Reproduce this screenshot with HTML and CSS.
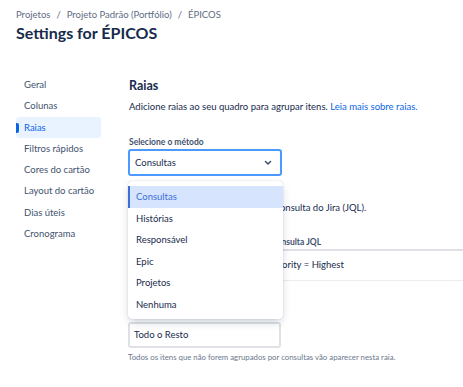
FILE: index.html
```html
<!DOCTYPE html>
<html lang="pt">
<head>
  <meta charset="UTF-8">
  <title>Settings for ÉPICOS</title>
  <link rel="stylesheet" href="styles.css">
</head>
<body>

  <div class="breadcrumb">
    <span>Projetos</span><span class="sep">/</span><span>Projeto Padrão (Portfólio)</span><span class="sep">/</span><span>ÉPICOS</span>
  </div>
  <h1 class="title">Settings for ÉPICOS</h1>

  <div class="layout">
    <ul class="side-nav">
      <li>Geral</li>
      <li>Colunas</li>
      <li class="active">Raias</li>
      <li>Filtros rápidos</li>
      <li>Cores do cartão</li>
      <li>Layout do cartão</li>
      <li>Dias úteis</li>
      <li>Cronograma</li>
    </ul>

    <div class="content">
      <h2>Raias</h2>
      <p class="desc">Adicione raias ao seu quadro para agrupar itens. <a href="#">Leia mais sobre raias.</a></p>

      <div class="field-label">Selecione o método</div>
      <div class="select-wrap">
        <div class="select">
          <span>Consultas</span>
          <svg width="8" height="6" viewBox="0 0 8 6"><path d="M1.5 1.5 L4 4 L6.5 1.5" fill="none" stroke="#42526e" stroke-width="1.6" stroke-linecap="round" stroke-linejoin="round"/></svg>
        </div>
        <!-- menu aberto -->
        <ul class="dropdown">
          <li class="selected">Consultas</li>
          <li>Histórias</li>
          <li>Responsável</li>
          <li>Epic</li>
          <li>Projetos</li>
          <li>Nenhuma</li>
        </ul>
      </div>

      <p class="info">Defina cada raia com base em uma consulta do Jira (JQL).</p>

      <table class="lanes">
        <tr>
          <th class="col-name">Nome</th>
          <th>Consulta JQL</th>
        </tr>
        <tr>
          <td class="col-name">Expedite</td>
          <td>priority = Highest</td>
        </tr>
      </table>

      <div class="input">Todo o Resto</div>
      <p class="help">Todos os itens que não forem agrupados por consultas vão aparecer nesta raia.</p>
    </div>
  </div>

</body>
</html>
```

FILE: styles.css
```css
html, body {
  overflow: hidden;
}

body {
  margin: 0;
  padding: 8px 16px 0;
  width: 600px;
  font-family: 'Lato', 'Noto Sans', sans-serif;
  color: #172b4d;
  background-color: #fff;
}

.breadcrumb {
  font-size: 9.5px;
  line-height: 14px;
  color: #5e6c84;
}

.breadcrumb .sep {
  margin: 0 6px;
}

.title {
  margin: 0;
  font-size: 16px;
  line-height: 22px;
  font-weight: 700;
}

.layout {
  display: flex;
  gap: 28px;
  margin-top: 30px;
}

.side-nav {
  list-style: none;
  margin: 0;
  padding: 0;
  width: 85px;
}

.side-nav li {
  position: relative;
  height: 21.3px;
  line-height: 21.3px;
  padding-left: 8px;
  font-size: 9.5px;
  color: #42526e;
  border-radius: 3px;
  white-space: nowrap;
}

.side-nav li.active {
  background-color: #e9f2ff;
  color: #0c66e4;
}

.side-nav li.active::before {
  content: "";
  position: absolute;
  left: 0;
  top: 6px;
  width: 3px;
  height: 10px;
  border-radius: 0 2px 2px 0;
  background-color: #0c66e4;
}

.content {
  width: 350px;
}

.content h2 {
  margin: 3px 0 0;
  font-size: 12.5px;
  line-height: 18px;
  font-weight: 700;
}

.desc {
  margin: 5px 0 0;
  font-size: 9.5px;
  line-height: 14px;
}

.desc a {
  color: #0c66e4;
  text-decoration: none;
}

.field-label {
  margin-top: 22px;
  font-size: 8.5px;
  line-height: 12px;
  font-weight: 700;
  color: #42526e;
}

.select-wrap {
  position: relative;
  width: 154px;
  margin-top: 1px;
  margin-left: -1px;
}

.select {
  display: flex;
  align-items: center;
  justify-content: space-between;
  height: 27px;
  box-sizing: border-box;
  padding: 0 8px 0 5px;
  border: 2px solid #4c9aff;
  border-radius: 3px;
  font-size: 9.5px;
}

.dropdown {
  position: absolute;
  top: 32px;
  left: 0;
  width: 155px;
  margin: 0;
  padding: 5px 0 4px;
  list-style: none;
  background-color: #fff;
  border-radius: 4px;
  box-shadow: 0 4px 10px -2px rgba(9, 30, 66, 0.25), 0 0 1px rgba(9, 30, 66, 0.31);
  z-index: 2;
}

.dropdown li {
  height: 21.5px;
  line-height: 21.5px;
  padding-left: 6px;
  font-size: 9.5px;
  color: #172b4d;
  border-left: 2px solid transparent;
}

.dropdown li.selected {
  background-color: #d6e4fd;
  border-left-color: #3b6fd8;
  color: #3b6fd8;
}

.info {
  margin: 25px 0 0;
  font-size: 9.5px;
  line-height: 14px;
}

.lanes {
  margin-top: 20px;
  width: 340px;
  border-collapse: collapse;
  font-size: 9.5px;
}

.lanes th {
  text-align: left;
  font-size: 8.5px;
  line-height: 12px;
  padding: 1px 4px;
  color: #42526e;
  border-bottom: 2px solid #dfe1e6;
}

.lanes td {
  line-height: 14px;
  padding: 7px 4px 8px;
  border-bottom: 1px solid #ebecf0;
}

.lanes .col-name {
  width: 130px;
}

.input {
  margin-top: 41px;
  margin-left: -1px;
  width: 153px;
  height: 26px;
  box-sizing: border-box;
  padding-left: 4px;
  border: 2px solid #dfe1e6;
  border-radius: 3px;
  font-size: 9.5px;
  line-height: 22px;
}

.help {
  margin: 3px 0 0;
  margin-left: -1px;
  font-size: 7.8px;
  line-height: 12px;
  color: #6b778c;
}
```
